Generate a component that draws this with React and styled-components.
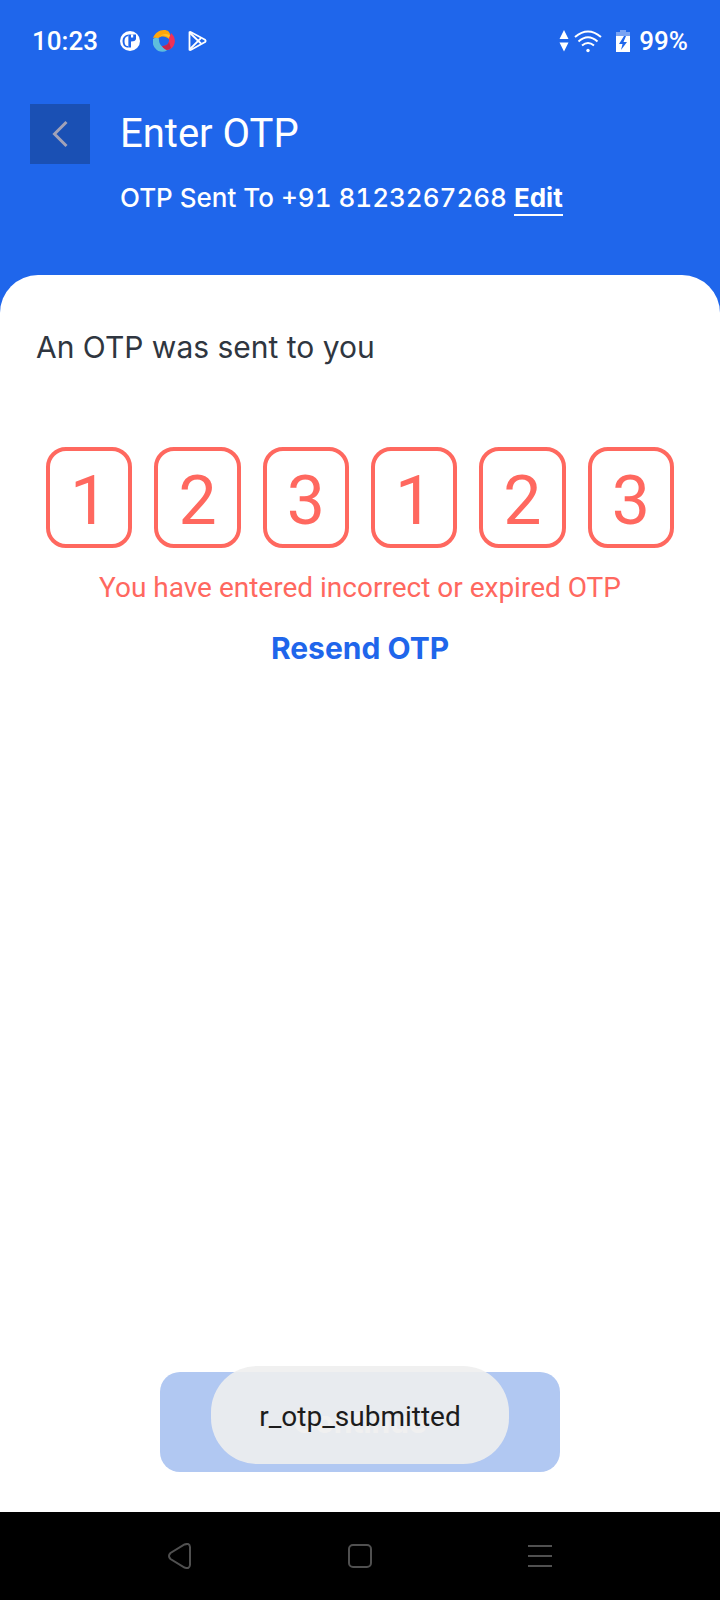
import React from "react";
import styled, { createGlobalStyle } from "styled-components";

const GlobalStyle = createGlobalStyle`
  *, *::before, *::after { box-sizing: border-box; }
  body { margin: 0; font-family: Roboto, "Liberation Sans", sans-serif; background: #ffffff; }
  button, input { font: inherit; }
`;

const Screen = styled.div`
  display: flex;
  flex-direction: column;
  min-height: 100vh;
  background: #1f66eb;
`;

const StatusBar = styled.div`
  display: flex;
  align-items: center;
  justify-content: space-between;
  height: 80px;
  padding: 2px 32px 0;
  color: #ffffff;
  font-size: 26px;
  font-weight: 500;
`;

const StatusGroup = styled.div`
  display: flex;
  align-items: center;
  gap: ${({ $gap }) => $gap}px;

  svg { display: block; }
`;

const Clock = styled.time`
  margin-right: 9px;
`;

const Header = styled.header`
  display: flex;
  align-items: flex-start;
  gap: 30px;
  padding: 24px 30px 59px;
  color: #ffffff;
`;

const BackButton = styled.button`
  display: flex;
  align-items: center;
  justify-content: center;
  width: 60px;
  height: 60px;
  padding: 0;
  border: 0;
  background: #1a50b4;
`;

const Title = styled.h1`
  margin: 0;
  font-size: 40px;
  line-height: 60px;
  font-weight: 400;
`;

const Subtitle = styled.p`
  margin: 16px 0 0;
  font-family: Inter, sans-serif;
  font-size: 26px;
  line-height: 36px;
  font-weight: 500;
  font-variant-numeric: tabular-nums;
`;

const EditLink = styled.a`
  display: inline-block;
  border-bottom: 2px solid #ffffff;
  color: #ffffff;
  font-weight: 700;
  line-height: 32px;
  text-decoration: none;
`;

const Sheet = styled.main`
  flex: 1;
  display: flex;
  flex-direction: column;
  padding-bottom: 40px;
  border-radius: 38px 38px 0 0;
  background: #ffffff;
`;

const Prompt = styled.p`
  margin: 52px 36px 0;
  color: #2f3640;
  font-family: Inter, sans-serif;
  font-size: 30px;
  line-height: 40px;
`;

const CodeRow = styled.div`
  display: flex;
  gap: 22px;
  margin: 80px 46px 0;
`;

const CodeInput = styled.input`
  flex: 1;
  min-width: 0;
  height: 101px;
  padding: 6px 0 0;
  border: 4px solid #ff685f;
  border-radius: 20px;
  outline: 0;
  background: transparent;
  color: #ff685f;
  font-size: 68px;
  text-align: center;
`;

const ErrorText = styled.p`
  margin: 20px 0 0;
  color: #ff685f;
  font-size: 28px;
  line-height: 40px;
  text-align: center;
`;

const ResendButton = styled.button`
  align-self: center;
  margin-top: 20px;
  padding: 0;
  border: 0;
  background: none;
  color: #1f66eb;
  font-family: Inter, sans-serif;
  font-size: 30px;
  line-height: 40px;
  font-weight: 700;
`;

const Footer = styled.div`
  position: relative;
  display: flex;
  justify-content: center;
  margin: auto 160px 0;
`;

const ContinueButton = styled.button`
  flex: 1;
  height: 100px;
  border: 0;
  border-radius: 20px;
  background: #b1c8f2;
  color: #ffffff;
  font-family: Inter, sans-serif;
  font-size: 30px;
  font-weight: 700;
`;

const Toast = styled.div`
  position: absolute;
  top: -6px;
  padding: 31px 48px 27px;
  border-radius: 46px;
  background: rgba(238, 238, 238, 0.9);
  color: #1c1c1c;
  font-size: 28px;
  line-height: 40px;
  white-space: nowrap;
`;

const NavBar = styled.nav`
  display: flex;
  justify-content: space-around;
  align-items: center;
  height: 88px;
  padding: 0 90px;
  background: #000000;
`;

const NavButton = styled.button`
  display: flex;
  padding: 0;
  border: 0;
  background: none;
`;

const TrueIcon = () => (
  <svg width="20" height="20" viewBox="0 0 20 20" aria-hidden="true">
    <circle cx="10" cy="10" r="10" fill="#fff" />
    <path d="M8.500 3.500Q2.500 4.500 2.500 10t4.500 6.500h1.500z" fill="#1f66eb" />
    <path d="M8.500 5Q4.500 5.500 4.500 10t2.500 5h1.500z" fill="#fff" />
    <path d="M8.500 3.500H16V8q-.5 2.500-5 2.500v6H8.500z" fill="#1f66eb" />
    <path d="M11 3.500h2.200v3H11z" fill="#fff" />
  </svg>
);

const SwirlIcon = () => (
  <svg width="22" height="22" viewBox="0 0 22 22" aria-hidden="true">
    <path d="M0 8C2 3 6 0 11 0c4 0 6 2 6.500 6.500L16 9C13 6 8 5.500 5 8.500 3 7.500 1.500 7.500 0 8z" fill="#ffa60a" />
    <path d="M6 7.500C9 4.500 13 5 16.500 8l1-2C15 3 9 3 6 7.500z" fill="#ffc12e" />
    <path d="M18 3c4 3 5 9 2.500 13S14 21 10 19l-1-3c4 0 7-2 7-6s1-3 2-7z" fill="#ef3158" />
    <path d="M9 16c4 0 6-1.500 7-4l2 6c-3 2.500-7 2.500-9-2z" fill="#c8264c" />
    <path d="M0 9c2-1.500 4-1.500 6-.5C5.500 13 8 17 14 20.500 10 23 5 22 2 18S0 12 0 9z" fill="#5fbddc" />
  </svg>
);

const PlayStoreIcon = () => (
  <svg width="19" height="20" viewBox="0 0 19 20" fill="none" stroke="#fff" strokeWidth="1.800" strokeLinejoin="round" aria-hidden="true">
    <path d="M1.500 1.200q.6-.5 1.600 0l14 7.600q1 1.200 0 2.200l-14 7.800q-1 .5-1.600 0z" />
    <path d="M2 2l11 10.500M2 18L13 7.200" />
  </svg>
);

const TrafficIcon = () => (
  <svg width="10" height="22" viewBox="0 0 10 22" fill="#fff" aria-hidden="true">
    <path d="M5 0l4.500 9h-9zM5 21.500L.5 12.500h9z" />
  </svg>
);

const WifiIcon = () => (
  <svg width="28" height="23" viewBox="0 0 28 23" fill="none" stroke="#fff" strokeWidth="2" aria-hidden="true">
    <path d="M1 7Q14-4 27 7M4.500 11.500Q14 3 23.500 11.500M8 15.500Q14 10.500 20 15.500" />
    <circle cx="14" cy="20.500" r="1.700" fill="#fff" stroke="none" />
  </svg>
);

const BatteryIcon = () => (
  <svg width="14" height="22" viewBox="0 0 14 22" aria-hidden="true">
    <path d="M4 0h6v2h4v4H0V2h4z" fill="#79a3f3" />
    <path d="M0 6h14v16H0z" fill="#fff" />
    <path d="M8 6L3 14h3.500l-1.500 6 6-8H7.500L10 6z" fill="#1f66eb" />
  </svg>
);

const digits = ["1", "2", "3", "1", "2", "3"];

export default function App() {
  return (
    <>
      <GlobalStyle />
      <Screen>
        <StatusBar>
          <StatusGroup $gap={13}>
            <Clock>10:23</Clock>
            <TrueIcon />
            <SwirlIcon />
            <PlayStoreIcon />
          </StatusGroup>
          <StatusGroup $gap={14}>
            <StatusGroup $gap={5}>
              <TrafficIcon />
              <WifiIcon />
            </StatusGroup>
            <StatusGroup $gap={9}>
              <BatteryIcon />
              <span>99%</span>
            </StatusGroup>
          </StatusGroup>
        </StatusBar>

        <Header>
          <BackButton aria-label="Back">
            <svg width="16" height="28" viewBox="0 0 16 28" fill="none" stroke="#a2a2b8" strokeWidth="3" aria-hidden="true">
              <path d="M14.500 2L2.500 14l12 12" />
            </svg>
          </BackButton>
          <div>
            <Title>Enter OTP</Title>
            <Subtitle>
              OTP Sent To +91 8123267268 <EditLink href="#edit">Edit</EditLink>
            </Subtitle>
          </div>
        </Header>

        <Sheet>
          <Prompt>An OTP was sent to you</Prompt>
          <CodeRow>
            {digits.map((digit, i) => (
              <CodeInput
                key={i}
                aria-label={`Digit ${i + 1}`}
                aria-invalid="true"
                inputMode="numeric"
                maxLength={1}
                defaultValue={digit}
              />
            ))}
          </CodeRow>
          <ErrorText role="alert">You have entered incorrect or expired OTP</ErrorText>
          <ResendButton>Resend OTP</ResendButton>
          <Footer>
            <ContinueButton>Continue</ContinueButton>
            <Toast role="status">r_otp_submitted</Toast>
          </Footer>
        </Sheet>

        <NavBar>
          <NavButton aria-label="System back">
            <svg width="24" height="26" viewBox="0 0 24 26" fill="none" stroke="#505050" strokeWidth="2" aria-hidden="true">
              <path d="M16.500 1.500Q21.500-.5 22 4v18q-.5 4.500-5.500 2.500L2.500 16q-3-3 0-6z" />
            </svg>
          </NavButton>
          <NavButton aria-label="Home">
            <svg width="24" height="24" viewBox="0 0 24 24" fill="none" stroke="#505050" strokeWidth="2" aria-hidden="true">
              <rect x="1" y="1" width="22" height="22" rx="4" />
            </svg>
          </NavButton>
          <NavButton aria-label="Recent apps">
            <svg width="24" height="22" viewBox="0 0 24 22" stroke="#505050" strokeWidth="2" aria-hidden="true">
              <path d="M0 1h24M0 11h24M0 21h24" />
            </svg>
          </NavButton>
        </NavBar>
      </Screen>
    </>
  );
}
